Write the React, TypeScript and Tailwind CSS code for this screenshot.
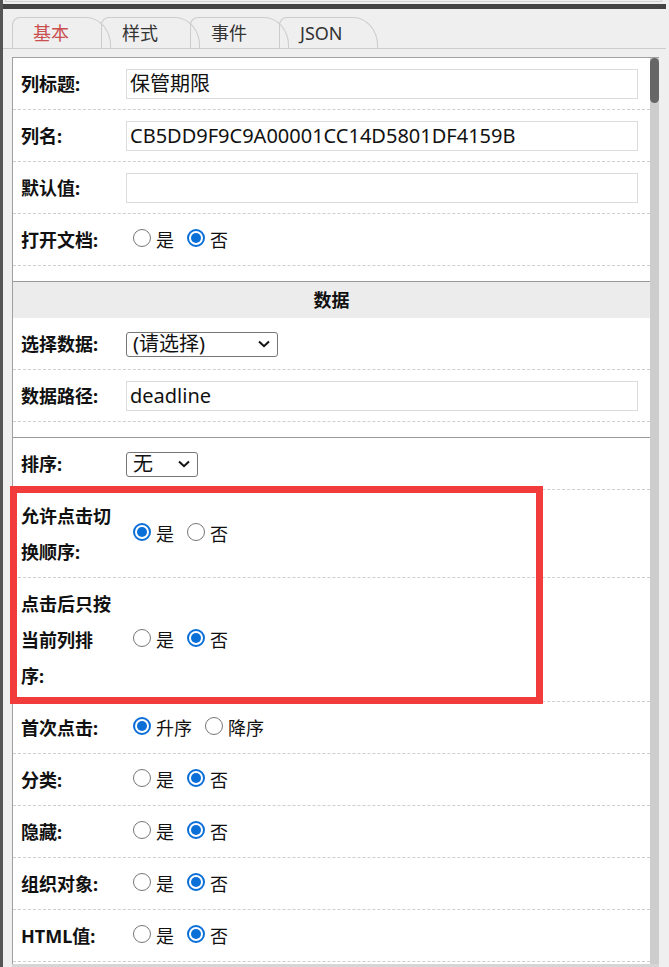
import React from "react";

const FONT = { fontFamily: '"Noto Sans", "Noto Sans CJK SC", sans-serif' };

function Radio({ checked }: { checked: boolean }) {
  return checked ? (
    <span className="mb-[5px] flex h-[18px] w-[18px] shrink-0 items-center justify-center rounded-full border-[2px] border-[#0b6fd8] bg-white">
      <span className="h-[10px] w-[10px] rounded-full bg-[#0b6fd8]" />
    </span>
  ) : (
    <span className="mb-[5px] block h-[18px] w-[18px] shrink-0 rounded-full border-[1.5px] border-[#777] bg-white" />
  );
}

function RadioGroup({ options, value }: { options: string[]; value: number }) {
  return (
    <div className="ml-[7px] flex items-center">
      {options.map((o, i) => (
        <div key={o} className={`flex items-center ${i > 0 ? "ml-[13px]" : ""}`}>
          <Radio checked={i === value} />
          <span className="ml-[5px] text-[18px] leading-[36px] text-[#111]">{o}</span>
        </div>
      ))}
    </div>
  );
}

function Row({ label, children }: { label: string; children?: React.ReactNode }) {
  return (
    <div className="flex items-center border-b border-dashed border-[#cfcfcf] pb-[7px] pt-[8px]">
      <div className="w-[113px] shrink-0 pl-[8px]">
        <div className="w-[92px] text-[18px] font-bold leading-[36px] text-[#111]">{label}</div>
      </div>
      <div className="flex min-h-[36px] flex-1 items-center pr-[12px]">{children}</div>
    </div>
  );
}

function TextInput({ value }: { value: string }) {
  return (
    <div className="flex h-[30px] w-full items-center border border-[#dcdcdc] bg-white pl-[3px] text-[20px] text-[#111]">
      {value}
    </div>
  );
}

function Select({ value, width }: { value: string; width: string }) {
  return (
    <div
      className={`flex h-[25px] items-center justify-between rounded-[3px] border border-[#767676] bg-white pl-[6px] pr-[7px] text-[20px] leading-none text-[#111] ${width}`}
    >
      <span>{value}</span>
      <svg width="12" height="8" viewBox="0 0 12 8">
        <path d="M1 1.5 L6 6.2 L11 1.5" fill="none" stroke="#111" strokeWidth="2" />
      </svg>
    </div>
  );
}

function Tab({ label, active, first }: { label: string; active?: boolean; first?: boolean }) {
  return (
    <div
      className={`relative flex h-[31px] w-[99px] items-center rounded-tl-[8px] rounded-tr-[25px_28px] border-l border-r border-t border-[#cccccc] pl-[20px] text-[18px] ${
        first ? "" : "-ml-[10px]"
      } ${active ? "z-10 text-[#c9504f]" : "text-[#333]"}`}
    >
      {label}
    </div>
  );
}

export default function App() {
  return (
    <div className="relative flex min-h-[967px] w-[669px] bg-[#efefef]" style={FONT}>
      <div className="w-[3px] shrink-0 bg-[#555]" />
      <div className="flex flex-1 flex-col">
        <div className="ml-[2px] mr-[7px] h-[2px] border-b border-l border-r border-[#d0d0d0]" />
        <div className="mt-[2px] mr-[3px] h-[5px] bg-[#444]" />
        <div className="mr-[3px] flex border-b border-[#cccccc] pl-[9px] pt-[8px]">
          <Tab label="基本" active first />
          <Tab label="样式" />
          <Tab label="事件" />
          <Tab label="JSON" />
        </div>
        <div className="ml-[9px] mt-[8px] flex w-[647px] border-l border-t border-[#a0a0a0] bg-white">
          <div className="w-[637px]">
            <Row label="列标题:">
              <TextInput value="保管期限" />
            </Row>
            <Row label="列名:">
              <TextInput value="CB5DD9F9C9A00001CC14D5801DF4159B" />
            </Row>
            <Row label="默认值:">
              <TextInput value="" />
            </Row>
            <Row label="打开文档:">
              <RadioGroup options={["是", "否"]} value={1} />
            </Row>
            <div className="h-[15px]" />
            <div className="border-t border-[#999]" />
            <div className="flex h-[36px] items-center justify-center bg-[#ececec] text-[18px] font-bold text-[#111]">
              数据
            </div>
            <Row label="选择数据:">
              <Select value="(请选择)" width="w-[152px]" />
            </Row>
            <Row label="数据路径:">
              <TextInput value="deadline" />
            </Row>
            <div className="h-[15px]" />
            <div className="border-t border-[#999]" />
            <Row label="排序:">
              <Select value="无" width="w-[72px]" />
            </Row>
            <Row label="允许点击切换顺序:">
              <RadioGroup options={["是", "否"]} value={0} />
            </Row>
            <Row label="点击后只按当前列排序:">
              <RadioGroup options={["是", "否"]} value={1} />
            </Row>
            <Row label="首次点击:">
              <RadioGroup options={["升序", "降序"]} value={0} />
            </Row>
            <Row label="分类:">
              <RadioGroup options={["是", "否"]} value={1} />
            </Row>
            <Row label="隐藏:">
              <RadioGroup options={["是", "否"]} value={1} />
            </Row>
            <Row label="组织对象:">
              <RadioGroup options={["是", "否"]} value={1} />
            </Row>
            <Row label="HTML值:">
              <RadioGroup options={["是", "否"]} value={1} />
            </Row>
            <div className="h-[2px]" />
          </div>
          <div className="w-[9px] shrink-0 bg-[#cdcdcd]">
            <div className="h-[45px] w-[9px] rounded-full bg-[#666]" />
          </div>
        </div>
        <div className="ml-[9px] h-[3px] w-[647px] bg-[#d6d6d6]" />
      </div>
      <div className="pointer-events-none absolute left-[10px] top-[486px] h-[218px] w-[533px] border-[7px] border-[#f23c3c]" />
    </div>
  );
}
